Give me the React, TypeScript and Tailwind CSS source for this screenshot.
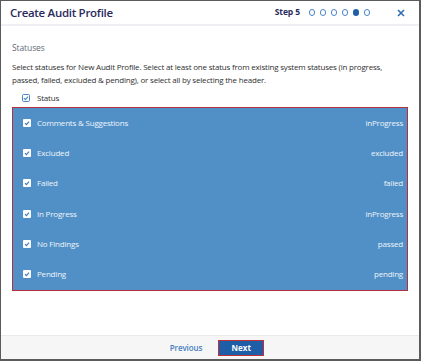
import React from "react";

const rows = [
  { name: "Comments & Suggestions", value: "inProgress" },
  { name: "Excluded", value: "excluded" },
  { name: "Failed", value: "failed" },
  { name: "In Progress", value: "inProgress" },
  { name: "No Findings", value: "passed" },
  { name: "Pending", value: "pending" },
];

const CheckBox = ({ filled }: { filled?: boolean }) => (
  <svg width="8" height="8" viewBox="0 0 8 8" className="shrink-0">
    {filled ? (
      <rect x="0" y="0" width="8" height="8" rx="1" fill="#ffffff" />
    ) : (
      <rect x="0.5" y="0.5" width="7" height="7" rx="1.2" fill="#ffffff" stroke="#4a86c8" strokeWidth="1" />
    )}
    <path d="M2 4.2 L3.4 5.6 L6 2.6" fill="none" stroke={filled ? "#3f79b8" : "#4a86c8"} strokeWidth="1.1" />
  </svg>
);

export default function App() {
  return (
    <div
      className="flex h-[361px] w-[421px] flex-col border-t border-l border-r-2 border-b-2 border-[#5b5b5b] bg-white"
      style={{ fontFamily: '"Open Sans", "Liberation Sans", sans-serif' }}
    >
      {/* header */}
      <div className="flex h-[25px] items-center border-b-2 border-[#eef0f4] pl-[9px] pr-[14px]">
        <div className="text-[11.5px] font-semibold tracking-[-0.3px] text-[#2a2b5c]">Create Audit Profile</div>
        <div className="ml-auto flex items-center">
          <span className="mr-[4px] text-[8.5px] font-bold tracking-[-0.1px] text-[#2a2b5c]">Step 5</span>
          {[0, 1, 2, 3, 4, 5].map((i) => (
            <span
              key={i}
              className={
                i === 4
                  ? "ml-[4.5px] h-[6.5px] w-[6.5px] rounded-full bg-[#1f5fa6]"
                  : "ml-[4.5px] h-[6.5px] w-[6.5px] rounded-full border border-[#4a86c8]"
              }
            />
          ))}
          <svg width="8" height="8" viewBox="0 0 8 8" className="ml-[27px]">
            <path d="M1 1 L7 7 M7 1 L1 7" stroke="#2f6db3" strokeWidth="1.6" />
          </svg>
        </div>
      </div>

      {/* body */}
      <div className="flex-1 px-[10px] pt-[16px]">
        <div className="pl-[1px] text-[8.5px] tracking-[-0.1px] text-[#5f6a78]">Statuses</div>
        <p className="mt-[5px] pl-[1px] text-[8px] leading-[13px] tracking-[-0.2px] text-[#2f2f2f]">
          Select statuses for New Audit Profile. Select at least one status from existing system statuses (in progress,
          passed, failed, excluded &amp; pending), or select all by selecting the header.
        </p>
        <div className="mt-[6px] flex items-center gap-[7px] pl-[11px] text-[8px] tracking-[-0.2px] text-[#2f2f2f]">
          <CheckBox />
          <span>Status</span>
        </div>
        <div className="mt-[3px] ml-px mr-[1px] border-[1.5px] border-[#b3303c] bg-[#5190c7]">
          {rows.map((r) => (
            <div
              key={r.name}
              className="flex h-[30.3px] items-center pl-[10px] pr-[4px] text-[8px] tracking-[-0.2px] text-[#eef4fa]"
            >
              <CheckBox filled />
              <span className="ml-[6px]">{r.name}</span>
              <span className="ml-auto">{r.value}</span>
            </div>
          ))}
        </div>
      </div>

      {/* footer */}
      <div className="flex h-[24px] items-center justify-center border-t border-[#eaeaea] bg-[#f6f6f6] pl-[14px]">
        <span className="text-[8px] font-semibold tracking-[-0.1px] text-[#4a7fc0]">Previous</span>
        <button className="ml-[16px] h-[16px] w-[46px] border border-[#c0303a] bg-[#1d5ea6] text-[8px] font-bold text-white">
          Next
        </button>
      </div>
    </div>
  );
}
